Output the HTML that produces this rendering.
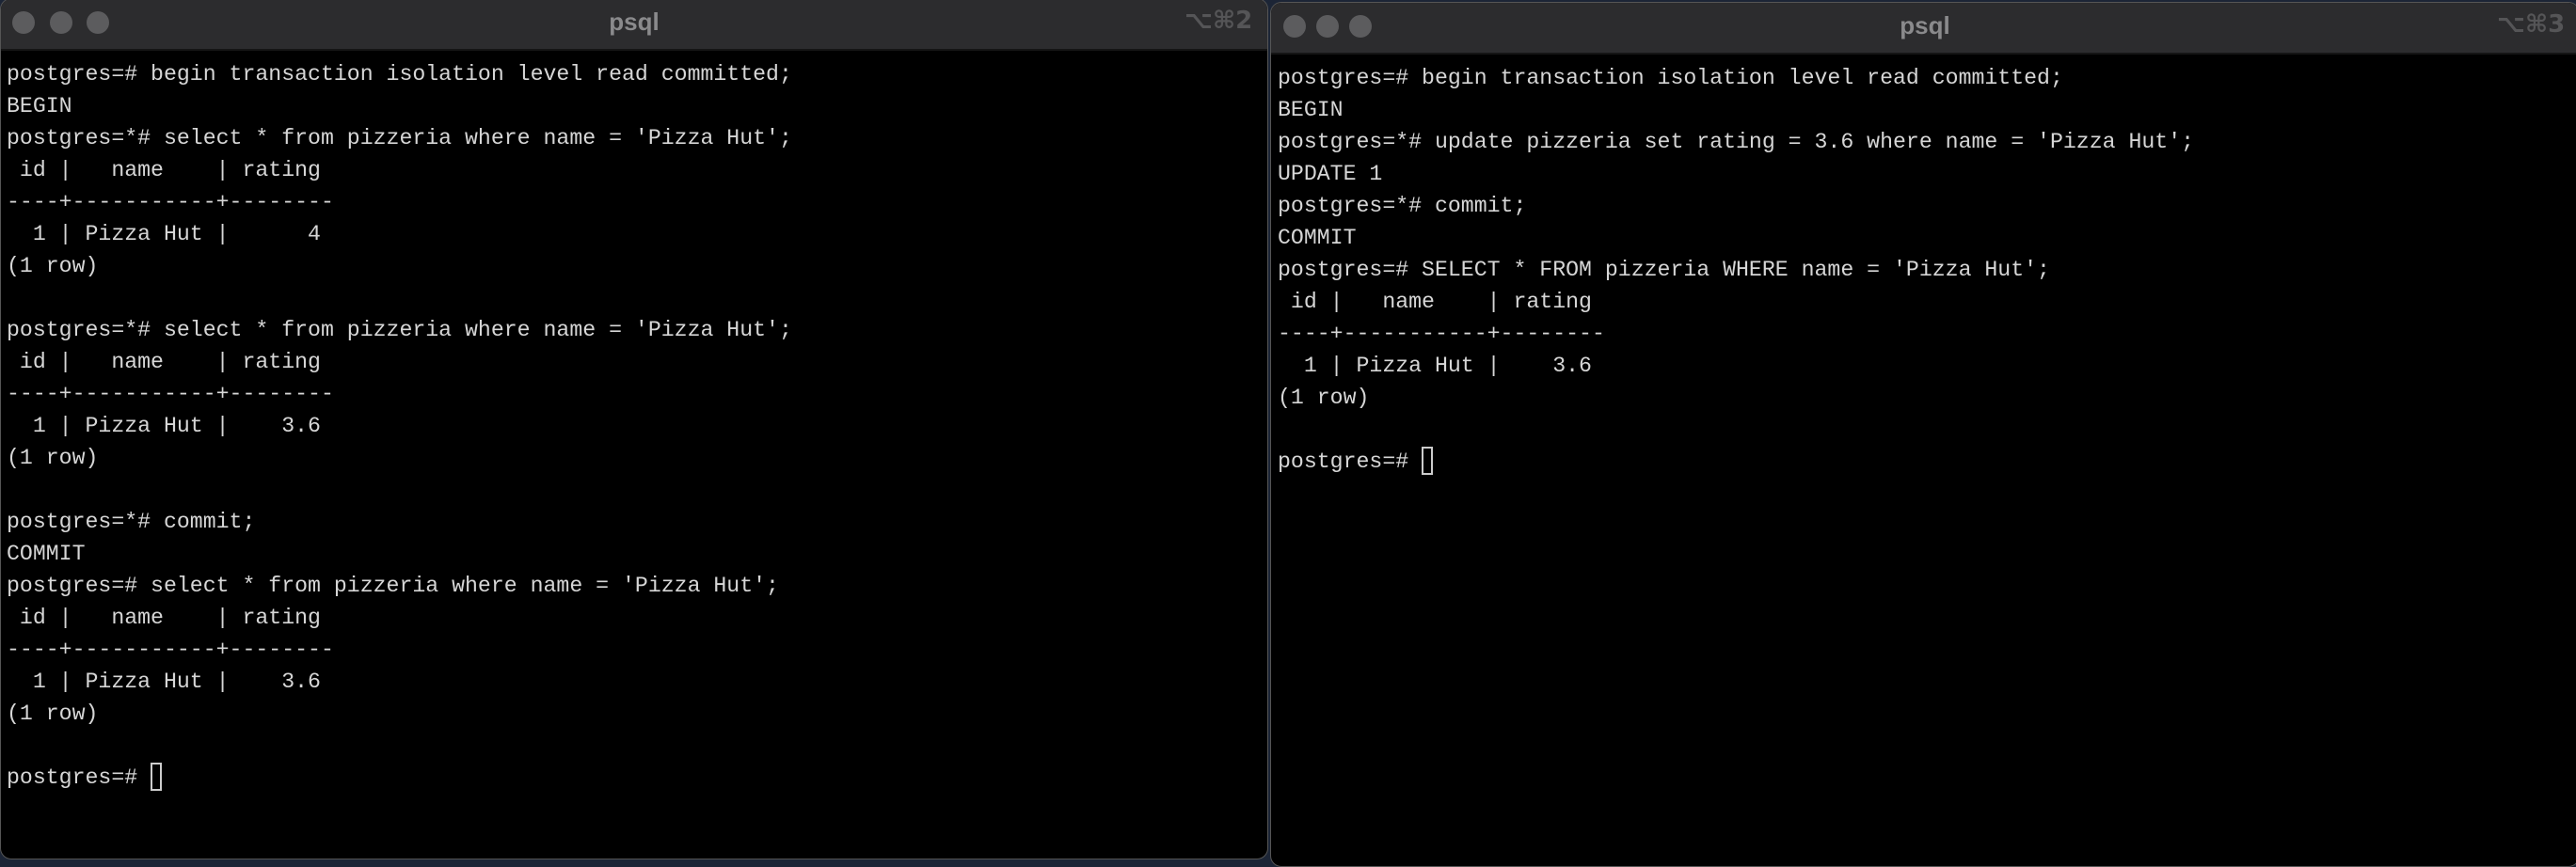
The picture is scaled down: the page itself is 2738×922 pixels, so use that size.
<!DOCTYPE html>
<html><head><meta charset="utf-8"><style>
html,body{margin:0;padding:0;width:2738px;height:916px;background:#1c2536;overflow:hidden}
.win{position:absolute;background:#000;border:1px solid #555;border-radius:12px;overflow:hidden;box-sizing:border-box}
.bar{position:absolute;left:0;right:0;top:0;height:53px;background:#2c2c2e;border-bottom:2px solid #151515}
.dot{position:absolute;top:13px;width:24px;height:24px;border-radius:50%;background:#5c5c5e}
.title{position:absolute;top:9px;width:100%;text-align:center;font:bold 26px "Liberation Sans",sans-serif;color:#8a8a8c}
.sc{position:absolute;top:8px;font:bold 26px "DejaVu Sans",sans-serif;color:#555557}
pre{position:absolute;margin:0;font-family:"Liberation Mono","DejaVu Sans Mono",monospace;font-size:23.2px;line-height:34px;color:#d6d6d6}
.cur{display:inline-block;width:12px;height:30px;border:2px solid #ccc;vertical-align:-8px;box-sizing:border-box}
</style></head><body>
<div class="win" style="left:0;top:-2px;width:1348px;height:916px">
<div class="bar"><div class="dot" style="left:12px"></div><div class="dot" style="left:52px"></div><div class="dot" style="left:91px"></div>
<div class="title">psql</div><div class="sc" style="left:1258px">⌥⌘2</div></div>
<pre style="left:6px;top:63px">postgres=# begin transaction isolation level read committed;
BEGIN
postgres=*# select * from pizzeria where name = 'Pizza Hut';
 id |   name    | rating
----+-----------+--------
  1 | Pizza Hut |      4
(1 row)

postgres=*# select * from pizzeria where name = 'Pizza Hut';
 id |   name    | rating
----+-----------+--------
  1 | Pizza Hut |    3.6
(1 row)

postgres=*# commit;
COMMIT
postgres=# select * from pizzeria where name = 'Pizza Hut';
 id |   name    | rating
----+-----------+--------
  1 | Pizza Hut |    3.6
(1 row)

postgres=# <span class="cur"></span></pre>
</div>
<div class="win" style="left:1350px;top:2px;width:1392px;height:920px">
<div class="bar"><div class="dot" style="left:13px"></div><div class="dot" style="left:48px"></div><div class="dot" style="left:83px"></div>
<div class="title">psql</div><div class="sc" style="left:1303px">⌥⌘3</div></div>
<pre style="left:7px;top:63px">postgres=# begin transaction isolation level read committed;
BEGIN
postgres=*# update pizzeria set rating = 3.6 where name = 'Pizza Hut';
UPDATE 1
postgres=*# commit;
COMMIT
postgres=# SELECT * FROM pizzeria WHERE name = 'Pizza Hut';
 id |   name    | rating
----+-----------+--------
  1 | Pizza Hut |    3.6
(1 row)

postgres=# <span class="cur"></span></pre>
</div>
</body></html>
